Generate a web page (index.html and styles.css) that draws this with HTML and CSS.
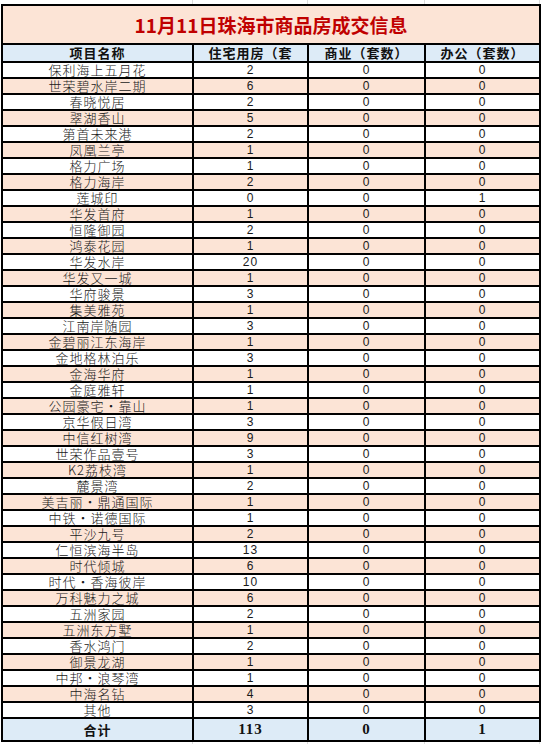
FILE: index.html
```html
<!DOCTYPE html>
<html lang="zh-CN">
<head>
<meta charset="utf-8">
<title>11月11日珠海市商品房成交信息</title>
<link rel="stylesheet" href="styles.css">
</head>
<body>
<div class="sheet">
  <div class="grid-strip"><span></span><span></span><span></span><span></span></div>
  <div class="table">
    <div class="title">11月11日珠海市商品房成交信息</div>
    <div class="row head"><div>项目名称</div><div>住宅用房（套</div><div>商业（套数）</div><div>办公（套数）</div></div>
    <div class="body">
      <div class="row"><div class="name">保利海上五月花</div><div>2</div><div>0</div><div>0</div></div>
      <div class="row"><div class="name">世荣碧水岸二期</div><div>6</div><div>0</div><div>0</div></div>
      <div class="row"><div class="name">春晓悦居</div><div>2</div><div>0</div><div>0</div></div>
      <div class="row"><div class="name">翠湖香山</div><div>5</div><div>0</div><div>0</div></div>
      <div class="row"><div class="name">第首未来港</div><div>2</div><div>0</div><div>0</div></div>
      <div class="row"><div class="name">凤凰兰亭</div><div>1</div><div>0</div><div>0</div></div>
      <div class="row"><div class="name">格力广场</div><div>1</div><div>0</div><div>0</div></div>
      <div class="row"><div class="name">格力海岸</div><div>2</div><div>0</div><div>0</div></div>
      <div class="row"><div class="name">莲城印</div><div>0</div><div>0</div><div>1</div></div>
      <div class="row"><div class="name">华发首府</div><div>1</div><div>0</div><div>0</div></div>
      <div class="row"><div class="name">恒隆御园</div><div>2</div><div>0</div><div>0</div></div>
      <div class="row"><div class="name">鸿泰花园</div><div>1</div><div>0</div><div>0</div></div>
      <div class="row"><div class="name">华发水岸</div><div>20</div><div>0</div><div>0</div></div>
      <div class="row"><div class="name">华发又一城</div><div>1</div><div>0</div><div>0</div></div>
      <div class="row"><div class="name">华府骏景</div><div>3</div><div>0</div><div>0</div></div>
      <div class="row"><div class="name">集美雅苑</div><div>1</div><div>0</div><div>0</div></div>
      <div class="row"><div class="name">江南岸随园</div><div>3</div><div>0</div><div>0</div></div>
      <div class="row"><div class="name">金碧丽江东海岸</div><div>1</div><div>0</div><div>0</div></div>
      <div class="row"><div class="name">金地格林泊乐</div><div>3</div><div>0</div><div>0</div></div>
      <div class="row"><div class="name">金海华府</div><div>1</div><div>0</div><div>0</div></div>
      <div class="row"><div class="name">金庭雅轩</div><div>1</div><div>0</div><div>0</div></div>
      <div class="row"><div class="name">公园豪宅·靠山</div><div>1</div><div>0</div><div>0</div></div>
      <div class="row"><div class="name">京华假日湾</div><div>3</div><div>0</div><div>0</div></div>
      <div class="row"><div class="name">中信红树湾</div><div>9</div><div>0</div><div>0</div></div>
      <div class="row"><div class="name">世荣作品壹号</div><div>3</div><div>0</div><div>0</div></div>
      <div class="row"><div class="name">K2荔枝湾</div><div>1</div><div>0</div><div>0</div></div>
      <div class="row"><div class="name">麓景湾</div><div>2</div><div>0</div><div>0</div></div>
      <div class="row"><div class="name">美吉丽·鼎通国际</div><div>1</div><div>0</div><div>0</div></div>
      <div class="row"><div class="name">中铁·诺德国际</div><div>1</div><div>0</div><div>0</div></div>
      <div class="row"><div class="name">平沙九号</div><div>2</div><div>0</div><div>0</div></div>
      <div class="row"><div class="name">仁恒滨海半岛</div><div>13</div><div>0</div><div>0</div></div>
      <div class="row"><div class="name">时代倾城</div><div>6</div><div>0</div><div>0</div></div>
      <div class="row"><div class="name">时代·香海彼岸</div><div>10</div><div>0</div><div>0</div></div>
      <div class="row"><div class="name">万科魅力之城</div><div>6</div><div>0</div><div>0</div></div>
      <div class="row"><div class="name">五洲家园</div><div>2</div><div>0</div><div>0</div></div>
      <div class="row"><div class="name">五洲东方墅</div><div>1</div><div>0</div><div>0</div></div>
      <div class="row"><div class="name">香水鸿门</div><div>2</div><div>0</div><div>0</div></div>
      <div class="row"><div class="name">御景龙湖</div><div>1</div><div>0</div><div>0</div></div>
      <div class="row"><div class="name">中邦·浪琴湾</div><div>1</div><div>0</div><div>0</div></div>
      <div class="row"><div class="name">中海名钻</div><div>4</div><div>0</div><div>0</div></div>
      <div class="row"><div class="name">其他</div><div>3</div><div>0</div><div>0</div></div>
    </div>
    <div class="row total"><div class="name">合计</div><div>113</div><div>0</div><div>1</div></div>
  </div>
  <div class="grid-strip"><span></span><span></span><span></span><span></span></div>
</div>
</body>
</html>
```
FILE: styles.css
```css
html, body {
  margin: 0;
  padding: 0;
  background: #ffffff;
}

.sheet {
  width: 544px;
  font-family: "Noto Sans CJK SC", "Noto Sans", sans-serif;
  color: #111111;
}

.grid-strip {
  display: grid;
  grid-template-columns: 193px 115px 117px 115px;
  height: 4px;
}

.grid-strip span {
  border-right: 1px solid #dcdcdc;
}

.table {
  margin-left: 1px;
  width: 540px;
  box-sizing: border-box;
  border-left: 2px solid #000;
  border-top: 2px solid #000;
}

.title {
  height: 39px;
  box-sizing: border-box;
  border-right: 2px solid #000;
  border-bottom: 2px solid #000;
  background: #fce4d6;
  color: #c00000;
  font-size: 19px;
  font-weight: 700;
  line-height: 24px;
  display: flex;
  align-items: center;
  justify-content: center;
  padding-top: 1px;
}

.row {
  display: grid;
  grid-template-columns: 191px 115px 117px 115px;
}

.row > div {
  box-sizing: border-box;
  border-right: 2px solid #000;
  border-bottom: 2px solid #000;
  text-align: center;
  white-space: nowrap;
}

.head {
  height: 18px;
  background: #ddebf7;
}

.head > div {
  font-size: 13px;
  font-weight: 700;
  line-height: 16px;
  letter-spacing: 1px;
}

.body .row {
  height: 16px;
}

.body .row:nth-child(even) {
  background: #fce4d6;
}

.body .row > div {
  font-family: "Liberation Sans", sans-serif;
  font-size: 12px;
  line-height: 14px;
  letter-spacing: 1px;
  color: #1a1a1a;
}

.body .row > div.name {
  font-family: "Noto Sans CJK SC", sans-serif;
  font-size: 13px;
  font-weight: 300;
  line-height: 14px;
  letter-spacing: 1px;
}

.total {
  height: 23px;
  background: #ddebf7;
}

.total > div {
  font-family: "Liberation Serif", serif;
  font-size: 15px;
  font-weight: 700;
  line-height: 21px;
  letter-spacing: 1px;
}

.total > div.name {
  font-family: "Noto Sans CJK SC", sans-serif;
  font-size: 13px;
  letter-spacing: 1px;
}
```
